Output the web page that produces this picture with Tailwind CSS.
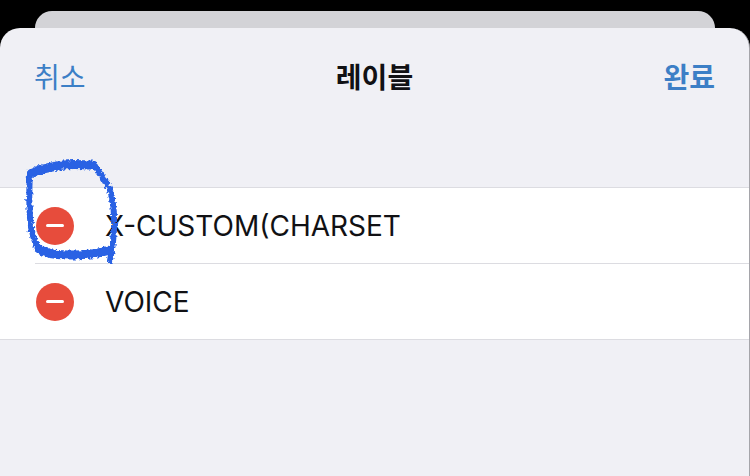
<!DOCTYPE html>
<html lang="ko">

<head>
    <meta charset="UTF-8">
    <title>레이블</title>
    <script src="https://cdn.jsdelivr.net/npm/@tailwindcss/browser@4"></script>
    <meta name="viewport" content="width=device-width, initial-scale=1.0">
</head>

<body class="bg-black min-h-screen flex flex-col pt-[11px] font-['Inter','Noto_Sans_CJK_KR',sans-serif] text-[#111114]">
    <!-- Sheet behind -->
    <div class="h-[17px] mx-[35px] bg-[#d3d3d7] rounded-t-[17px]"></div>

    <!-- Front sheet -->
    <main class="grow bg-[#f0f0f5] rounded-t-[20px] border-r border-[#a5a5aa]">
        <header class="grid grid-cols-3 items-center h-25 px-[34px] text-[28px] leading-8">
            <button type="button" class="justify-self-start text-[#3c7fc6]">취소</button>
            <h1 class="justify-self-center font-semibold">레이블</h1>
            <button type="button" class="justify-self-end font-semibold text-[#3c7fc6]">완료</button>
        </header>

        <ul class="relative mt-[59px] bg-white border-y border-[#dcdce1]">
            <li class="flex items-center gap-[31px] h-[75px] pl-9">
                <button type="button" aria-label="X-CUSTOM(CHARSET 삭제" class="size-[38px] rounded-full bg-[#e74c3c] flex items-center justify-center">
                    <span class="w-[18px] h-[3px] rounded-full bg-white"></span>
                </button>
                <span class="text-[28px] leading-8">X-CUSTOM(CHARSET</span>
            </li>
            <li class="flex items-center gap-[31px] h-[76px] ml-[35px] pl-px border-t border-[#dcdce1]">
                <button type="button" aria-label="VOICE 삭제" class="size-[38px] rounded-full bg-[#e74c3c] flex items-center justify-center">
                    <span class="w-[18px] h-[3px] rounded-full bg-white"></span>
                </button>
                <span class="text-[28px] leading-8">VOICE</span>
            </li>

            <!-- Crayon mark around the first delete button -->
            <svg class="absolute left-5 -top-8 w-[100px] h-[114px] pointer-events-none" viewBox="0 0 100 114" fill="none" stroke="#2962e4" stroke-linecap="round" stroke-linejoin="round" aria-hidden="true">
                <defs>
                    <filter id="crayon" x="-10%" y="-10%" width="120%" height="120%">
                        <feTurbulence type="fractalNoise" baseFrequency="0.35" numOctaves="2" seed="4" />
                        <feDisplacementMap in="SourceGraphic" scale="5" xChannelSelector="R" yChannelSelector="G" />
                    </filter>
                </defs>
                <g filter="url(#crayon)">
                    <path stroke-width="6" d="M10 17C9 34 9 48 10 62C11 76 13 84 18 91" />
                    <path stroke-width="9" d="M12 17C22 12 32 11 43 9C54 8 64 9 73 9" />
                    <path stroke-width="6" d="M74 9C80 17 88 27 91 37C94 50 95 68 93 86L90 105" />
                    <path stroke-width="9" d="M18 92C26 99 40 99 54 99C68 99 80 97 90 94" />
                </g>
            </svg>
        </ul>
    </main>
</body>

</html>
